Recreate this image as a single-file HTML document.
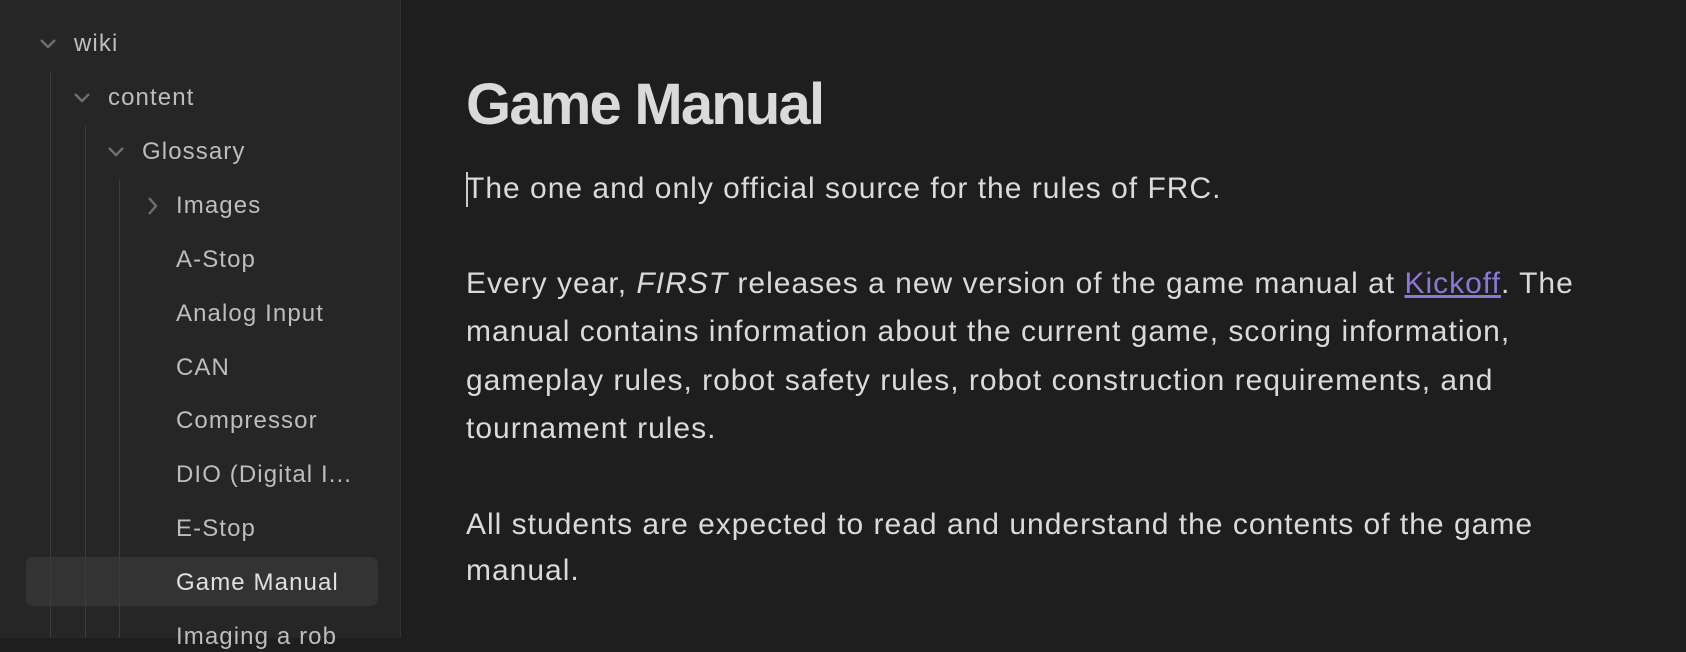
<!DOCTYPE html>
<html><head><meta charset="utf-8"><style>
*{margin:0;padding:0;box-sizing:border-box}
body{width:1686px;height:638px;overflow:hidden;background:#1e1e1e;font-family:"Liberation Sans",sans-serif;position:relative}
#side{position:absolute;left:0;top:0;width:401px;height:638px;background:#262626;border-right:1px solid #333}
.row{position:absolute;height:30px;line-height:30px;font-size:24px;letter-spacing:1.1px;color:#bdbdbd;white-space:nowrap;margin-top:1px}
.gl{position:absolute;width:1px;background:#3c3c3c;top:0;bottom:0}
.sel{position:absolute;left:26px;top:557px;width:352px;height:49px;background:#333;border-radius:7px}
svg{position:absolute}
#main{position:absolute;left:466px;top:0;right:0;color:#dadada}
h1{position:absolute;top:71px;font-size:58px;font-weight:bold;letter-spacing:-1.8px;color:#dadada;white-space:nowrap}
.p{position:absolute;font-size:30px;letter-spacing:1px;white-space:nowrap;line-height:48px}
a{color:#8c78d4;text-decoration:underline}
.cur{position:absolute;left:0;top:172px;width:2px;height:35px;background:#ccc}
</style></head><body>
<div id="side">
<div class="sel"></div>
<div class="gl" style="left:50px;top:72px"></div>
<div class="gl" style="left:85px;top:126px"></div>
<div class="gl" style="left:119px;top:180px"></div>
<svg style="left:39px;top:36px" width="18" height="14"><path d="M2 4 L9 11 L16 4" stroke="#6e6e6e" stroke-width="2.4" fill="none"/></svg>
<div class="row" style="left:74px;top:28px">wiki</div>
<svg style="left:73px;top:90px" width="18" height="14"><path d="M2 4 L9 11 L16 4" stroke="#6e6e6e" stroke-width="2.4" fill="none"/></svg>
<div class="row" style="left:108px;top:82px">content</div>
<svg style="left:107px;top:144px" width="18" height="14"><path d="M2 4 L9 11 L16 4" stroke="#6e6e6e" stroke-width="2.4" fill="none"/></svg>
<div class="row" style="left:142px;top:136px">Glossary</div>
<svg style="left:145px;top:196px" width="14" height="20"><path d="M4 2 L11 10 L4 18" stroke="#6e6e6e" stroke-width="2.4" fill="none"/></svg>
<div class="row" style="left:176px;top:190px">Images</div>
<div class="row" style="left:176px;top:244px">A-Stop</div>
<div class="row" style="left:176px;top:298px">Analog Input</div>
<div class="row" style="left:176px;top:352px">CAN</div>
<div class="row" style="left:176px;top:405px">Compressor</div>
<div class="row" style="left:176px;top:459px">DIO (Digital I...</div>
<div class="row" style="left:176px;top:513px">E-Stop</div>
<div class="row" style="left:176px;top:567px;color:#e0e0e0">Game Manual</div>
<div class="row" style="left:176px;top:621px">Imaging a rob</div>
</div>
<div id="main">
<h1>Game Manual</h1>
<div class="cur"></div>
<div class="p" style="top:165px">The one and only official source for the rules of FRC.</div>
<div class="p" style="top:260px">Every year, <i>FIRST</i> releases a new version of the game manual at <a>Kickoff</a>. The</div>
<div class="p" style="top:308px">manual contains information about the current game, scoring information,</div>
<div class="p" style="top:357px">gameplay rules, robot safety rules, robot construction requirements, and</div>
<div class="p" style="top:405px">tournament rules.</div>
<div class="p" style="top:501px">All students are expected to read and understand the contents of the game</div>
<div class="p" style="top:547px">manual.</div>
</div>
</body></html>
